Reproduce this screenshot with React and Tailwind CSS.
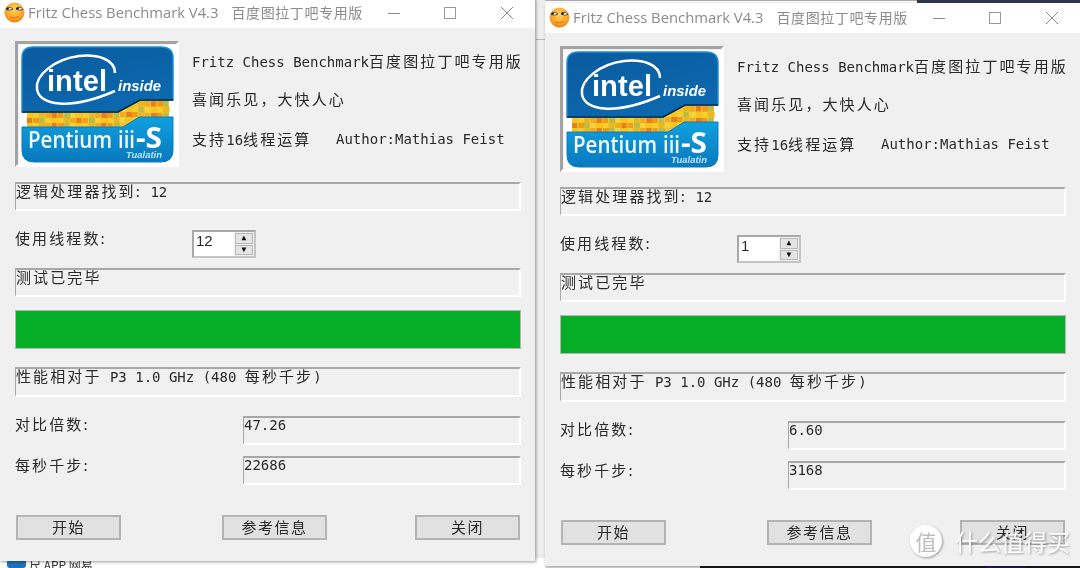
import React from "react";

// Chinese text sits on a wider pitch than the mono latin text
const Zh = ({ children }) => (
  <span className="font-['Noto_Sans_CJK_SC',sans-serif] text-[15px] tracking-[2.1px]">{children}</span>
);

const mono = "font-['DejaVu_Sans_Mono','Noto_Sans_CJK_SC',monospace] text-[14px] text-[#2a2a2a]";

function SunkenBox({ className = "", children }) {
  return (
    <div
      className={`h-[29px] border-t-2 border-b-2 border-l border-r-2 border-t-[#a8a8a8] border-l-[#a8a8a8] border-r-white border-b-white leading-[14px] whitespace-nowrap ${className}`}
    >
      {children}
    </div>
  );
}

function Smiley({ id }) {
  return (
    <svg width="21" height="21" viewBox="0 0 21 21" className="shrink-0">
      <defs>
        <radialGradient id={id} cx="50%" cy="35%" r="65%">
          <stop offset="0%" stopColor="#ffd257" />
          <stop offset="70%" stopColor="#f9a42a" />
          <stop offset="100%" stopColor="#ec7d12" />
        </radialGradient>
      </defs>
      <circle cx="10.5" cy="10.5" r="10" fill={`url(#${id})`} />
      <path d="M2 7.5 Q5 3.5 9 7 Q6 9 2 7.5Z" fill="#fff" stroke="#333" strokeWidth="0.8" />
      <path d="M12 7 Q16 3.5 19 7.5 Q15 9 12 7Z" fill="#fff" stroke="#333" strokeWidth="0.8" />
      <circle cx="3.6" cy="6.6" r="1.2" fill="#111" />
      <circle cx="13.6" cy="6.4" r="1.2" fill="#111" />
      <path d="M6 15 Q10.5 17 15 14.5" stroke="#d9761a" strokeWidth="1" fill="none" />
    </svg>
  );
}

const chipColors = ["#f7c51e", "#f09a1c", "#e8b820", "#f4d43a", "#e5801c", "#f6cf2c", "#b9bc4a", "#f2aa20"];

function IntelBadge({ id }) {
  const cells = [];
  for (let i = 0; i < 69; i++) {
    const x = 8 + (i % 23) * 6.2;
    const row = Math.floor(i / 23);
    const top = x > 118 ? 56 + row * 6 : x > 96 ? 62 + row * 5 : 68 + row * 5;
    cells.push(
      <rect
        key={i}
        x={x}
        y={top}
        width={i % 3 === 0 ? 6.2 : 5}
        height={5.5}
        fill={chipColors[(i * 5 + row) % chipColors.length]}
      />
    );
  }
  return (
    <svg width="157" height="119" viewBox="0 0 157 119">
      <defs>
        <linearGradient id={`${id}-top`} x1="0" y1="0" x2="0.6" y2="1">
          <stop offset="0%" stopColor="#0a5a9e" />
          <stop offset="100%" stopColor="#0c69ae" />
        </linearGradient>
        <linearGradient id={`${id}-low`} x1="0" y1="0" x2="0" y2="1">
          <stop offset="0%" stopColor="#0fa1de" />
          <stop offset="100%" stopColor="#0a78bf" />
        </linearGradient>
      </defs>
      <rect width="157" height="119" fill="#fff" />
      <rect x="8" y="56" width="142" height="28" fill="#f4c430" />
      {cells}
      <path d="M3 82 H104 L120 72 H154 V105 Q154 117 142 117 H15 Q3 117 3 105Z" fill={`url(#${id}-low)`} stroke="#0b7cc2" strokeWidth="1" />
      <path d="M3 67 V13 Q3 2 14 2 H142 Q154 2 154 13 V55 H121 L99 67 H3Z" fill={`url(#${id}-top)`} stroke="#1a8fd0" strokeWidth="1.5" />
      <path d="M3 67 H99 L121 55 H154" stroke="#07233f" strokeWidth="1.6" fill="none" />
      <path d="M96 28 C96 14 78 9 60 11 C36 14 16 30 18 44 C20 60 50 66 96 46" fill="none" stroke="#fff" strokeWidth="2.5" />
      <text x="28" y="46" fill="#fff" fontFamily="'Liberation Sans',sans-serif" fontSize="29" fontWeight="700" textLength="60" lengthAdjust="spacingAndGlyphs">intel</text>
      <text x="99" y="46" fill="#fff" fontFamily="'Liberation Sans',sans-serif" fontSize="14" fontStyle="italic" fontWeight="700" textLength="43" lengthAdjust="spacingAndGlyphs">inside</text>
      <text x="9" y="103" fill="#f2f8fc" fontFamily="'Open Sans',sans-serif" fontSize="23" fontWeight="600" textLength="84" lengthAdjust="spacingAndGlyphs">Pentium</text>
      <text x="99" y="103" fill="#f2f8fc" fontFamily="'Open Sans',sans-serif" fontSize="23" fontWeight="600" textLength="17" lengthAdjust="spacingAndGlyphs">iii</text>
      <text x="117" y="103" fill="#fff" fontFamily="'Open Sans',sans-serif" fontSize="29" fontWeight="700" textLength="26" lengthAdjust="spacingAndGlyphs">-S</text>
      <text x="107" y="113" fill="#bfe6f8" fontFamily="'Liberation Sans',sans-serif" fontSize="9" fontStyle="italic" fontWeight="700" textLength="36" lengthAdjust="spacingAndGlyphs">Tualatin</text>
    </svg>
  );
}

function Spinner({ value }) {
  return (
    <div className="ml-[97px] w-[64px] h-[28px] flex border-2 border-t-[#a8a8a8] border-l-[#a8a8a8] border-r-[#c4c4c4] border-b-[#c4c4c4] bg-white">
      <span className="flex-1 pl-[2px] font-['Liberation_Sans',sans-serif] text-[15px] leading-[18px] text-[#2a2a2a]">{value}</span>
      <div className="w-[20px] flex flex-col bg-[#f0f0f0] p-[1px] gap-[1px]">
        <div className="flex-1 flex items-center justify-center bg-[#e4e4e4] border border-[#b8b8b8] text-[8px] leading-none text-[#111]">▲</div>
        <div className="flex-1 flex items-center justify-center bg-[#e4e4e4] border border-[#b8b8b8] text-[8px] leading-none text-[#111]">▼</div>
      </div>
    </div>
  );
}

function WinButton({ className = "", children }) {
  return (
    <div className={`h-[25px] w-[105px] flex items-center justify-center bg-[#e1e1e1] border-2 border-[#b4b4b4] font-['Noto_Sans_CJK_SC',sans-serif] text-[15px] tracking-[1.5px] text-[#2a2a2a] ${className}`}>
      {children}
    </div>
  );
}

function BenchWindow({ id, className, threads, ratio, speed }) {
  return (
    <div className={`relative z-10 w-[535px] h-[563px] shrink-0 flex flex-col bg-[#f0f0f0] shadow-[1px_1px_3px_rgba(0,0,0,0.4)] ${className}`}>
      <div className="h-[30px] shrink-0 bg-white flex items-center pl-[4px] pb-[1px]">
        <Smiley id={id} />
        <span className="ml-[3px] font-['Open_Sans',sans-serif] text-[14.8px] text-[#8b8b8b] whitespace-nowrap">Fritz Chess Benchmark V4.3</span>
        <span className="ml-[13px] font-['Noto_Sans_CJK_SC',sans-serif] text-[14px] tracking-[0.6px] text-[#8b8b8b] whitespace-nowrap">百度图拉丁吧专用版</span>
        <svg width="135" height="14" viewBox="0 0 135 14" className="ml-auto mr-[12px] shrink-0" fill="none" stroke="#8a8a8a" strokeWidth="1">
          <path d="M0 7.5 H12" />
          <rect x="56.5" y="1.5" width="11" height="11" stroke="#999" />
          <path d="M113 1 L125 13 M125 1 L113 13" />
        </svg>
      </div>

      <div className={`flex flex-col pl-[15px] pr-[14px] ${mono}`}>
        <div className="mt-[13px] h-[126px] flex">
          <div className="w-[164px] h-[126px] shrink-0 border-[3px] border-t-[#a3a3a3] border-l-[#a3a3a3] border-r-white border-b-white flex items-center justify-center">
            <IntelBadge id={`${id}-badge`} />
          </div>
          <div className="ml-[13px] flex flex-col whitespace-nowrap">
            <div className="mt-[9px] h-[22px] leading-[22px]">Fritz Chess Benchmark<Zh>百度图拉丁吧专用版</Zh></div>
            <div className="mt-[16px] h-[22px] leading-[22px]"><Zh>喜闻乐见，大快人心</Zh></div>
            <div className="mt-[18px] h-[22px] leading-[22px] flex">
              <span className="w-[144px]"><Zh>支持</Zh>16<Zh>线程运算</Zh></span>
              Author:Mathias Feist
            </div>
          </div>
        </div>

        <SunkenBox className="mt-[15px]"><Zh>逻辑处理器找到:</Zh> 12</SunkenBox>

        <div className="mt-[19px] h-[28px] flex items-start">
          <span className="w-[80px] -mt-[1px] leading-[18px] whitespace-nowrap"><Zh>使用线程数:</Zh></span>
          <Spinner value={threads} />
        </div>

        <SunkenBox className="mt-[10px]"><Zh>测试已完毕</Zh></SunkenBox>

        <div className="mt-[13px] h-[39px] bg-[#06ad27] border border-[#b5b5b5]" />

        <SunkenBox className="mt-[18px] h-[30px]"><Zh>性能相对于</Zh> P3 1.0 GHz (480 <Zh>每秒千步</Zh>)</SunkenBox>

        <div className="mt-[19px] h-[29px] flex">
          <span className="w-[228px] leading-[16px]"><Zh>对比倍数:</Zh></span>
          <SunkenBox className="flex-1">{ratio}</SunkenBox>
        </div>
        <div className="mt-[11px] h-[29px] flex">
          <span className="w-[228px] leading-[18px]"><Zh>每秒千步:</Zh></span>
          <SunkenBox className="flex-1">{speed}</SunkenBox>
        </div>

        <div className="mt-[30px] flex pl-[1px]">
          <WinButton>开始</WinButton>
          <WinButton className="ml-[101px]">参考信息</WinButton>
          <WinButton className="ml-[88px]">关闭</WinButton>
        </div>
      </div>
    </div>
  );
}

export default function App() {
  return (
    <div className="relative w-[1080px] h-[568px] overflow-hidden bg-[#ededed] blur-[0.5px]">
      {/* bits of the desktop showing behind the two windows */}
      <div className="absolute left-[536px] right-0 top-[39px] h-px bg-[#b9b9b9]" />
      <div className="absolute left-0 top-[558px] w-[545px] h-[10px] bg-white flex items-end pl-[7px] overflow-hidden">
        <div className="w-[19px] h-[7px] rounded-b-[3px] bg-[#1f73b8]" />
        <span className="ml-[3px] font-['Noto_Sans_CJK_SC',sans-serif] text-[12px] leading-[7px] text-[#333]">尺 APP 网易</span>
      </div>
      <div className="absolute left-[545px] right-0 top-0 h-[3px] bg-white border-t border-[#aaaaaa]" />
      <div className="absolute left-[917px] right-0 top-0 h-[3px] bg-[#2c3a4a]" />
      <div className="absolute left-[700px] right-0 bottom-0 h-[3px] bg-[#1d1d22]" />
      <div className="absolute left-[985px] w-[40px] bottom-0 h-[2px] bg-[#2a1a5e]" />

      <div className="flex items-start">
        <BenchWindow id="left" className="-mt-[2px]" threads="12" ratio="47.26" speed="22686" />
        <BenchWindow id="right" className="mt-[3px] ml-[10px]" threads="1" ratio="6.60" speed="3168" />
      </div>

      {/* site watermark over the corner */}
      <div className="absolute z-20 left-[910px] top-[525px] flex items-center drop-shadow-[1px_1px_1px_rgba(0,0,0,0.35)]">
        <div className="w-[32px] h-[32px] rounded-full bg-white flex items-center justify-center font-['Noto_Sans_CJK_SC',sans-serif] text-[21px] leading-none text-[#bdbdbd]">值</div>
        <span className="ml-[13px] font-['Noto_Sans_CJK_SC',sans-serif] text-[23px] leading-none text-white whitespace-nowrap">什么值得买</span>
      </div>
    </div>
  );
}
